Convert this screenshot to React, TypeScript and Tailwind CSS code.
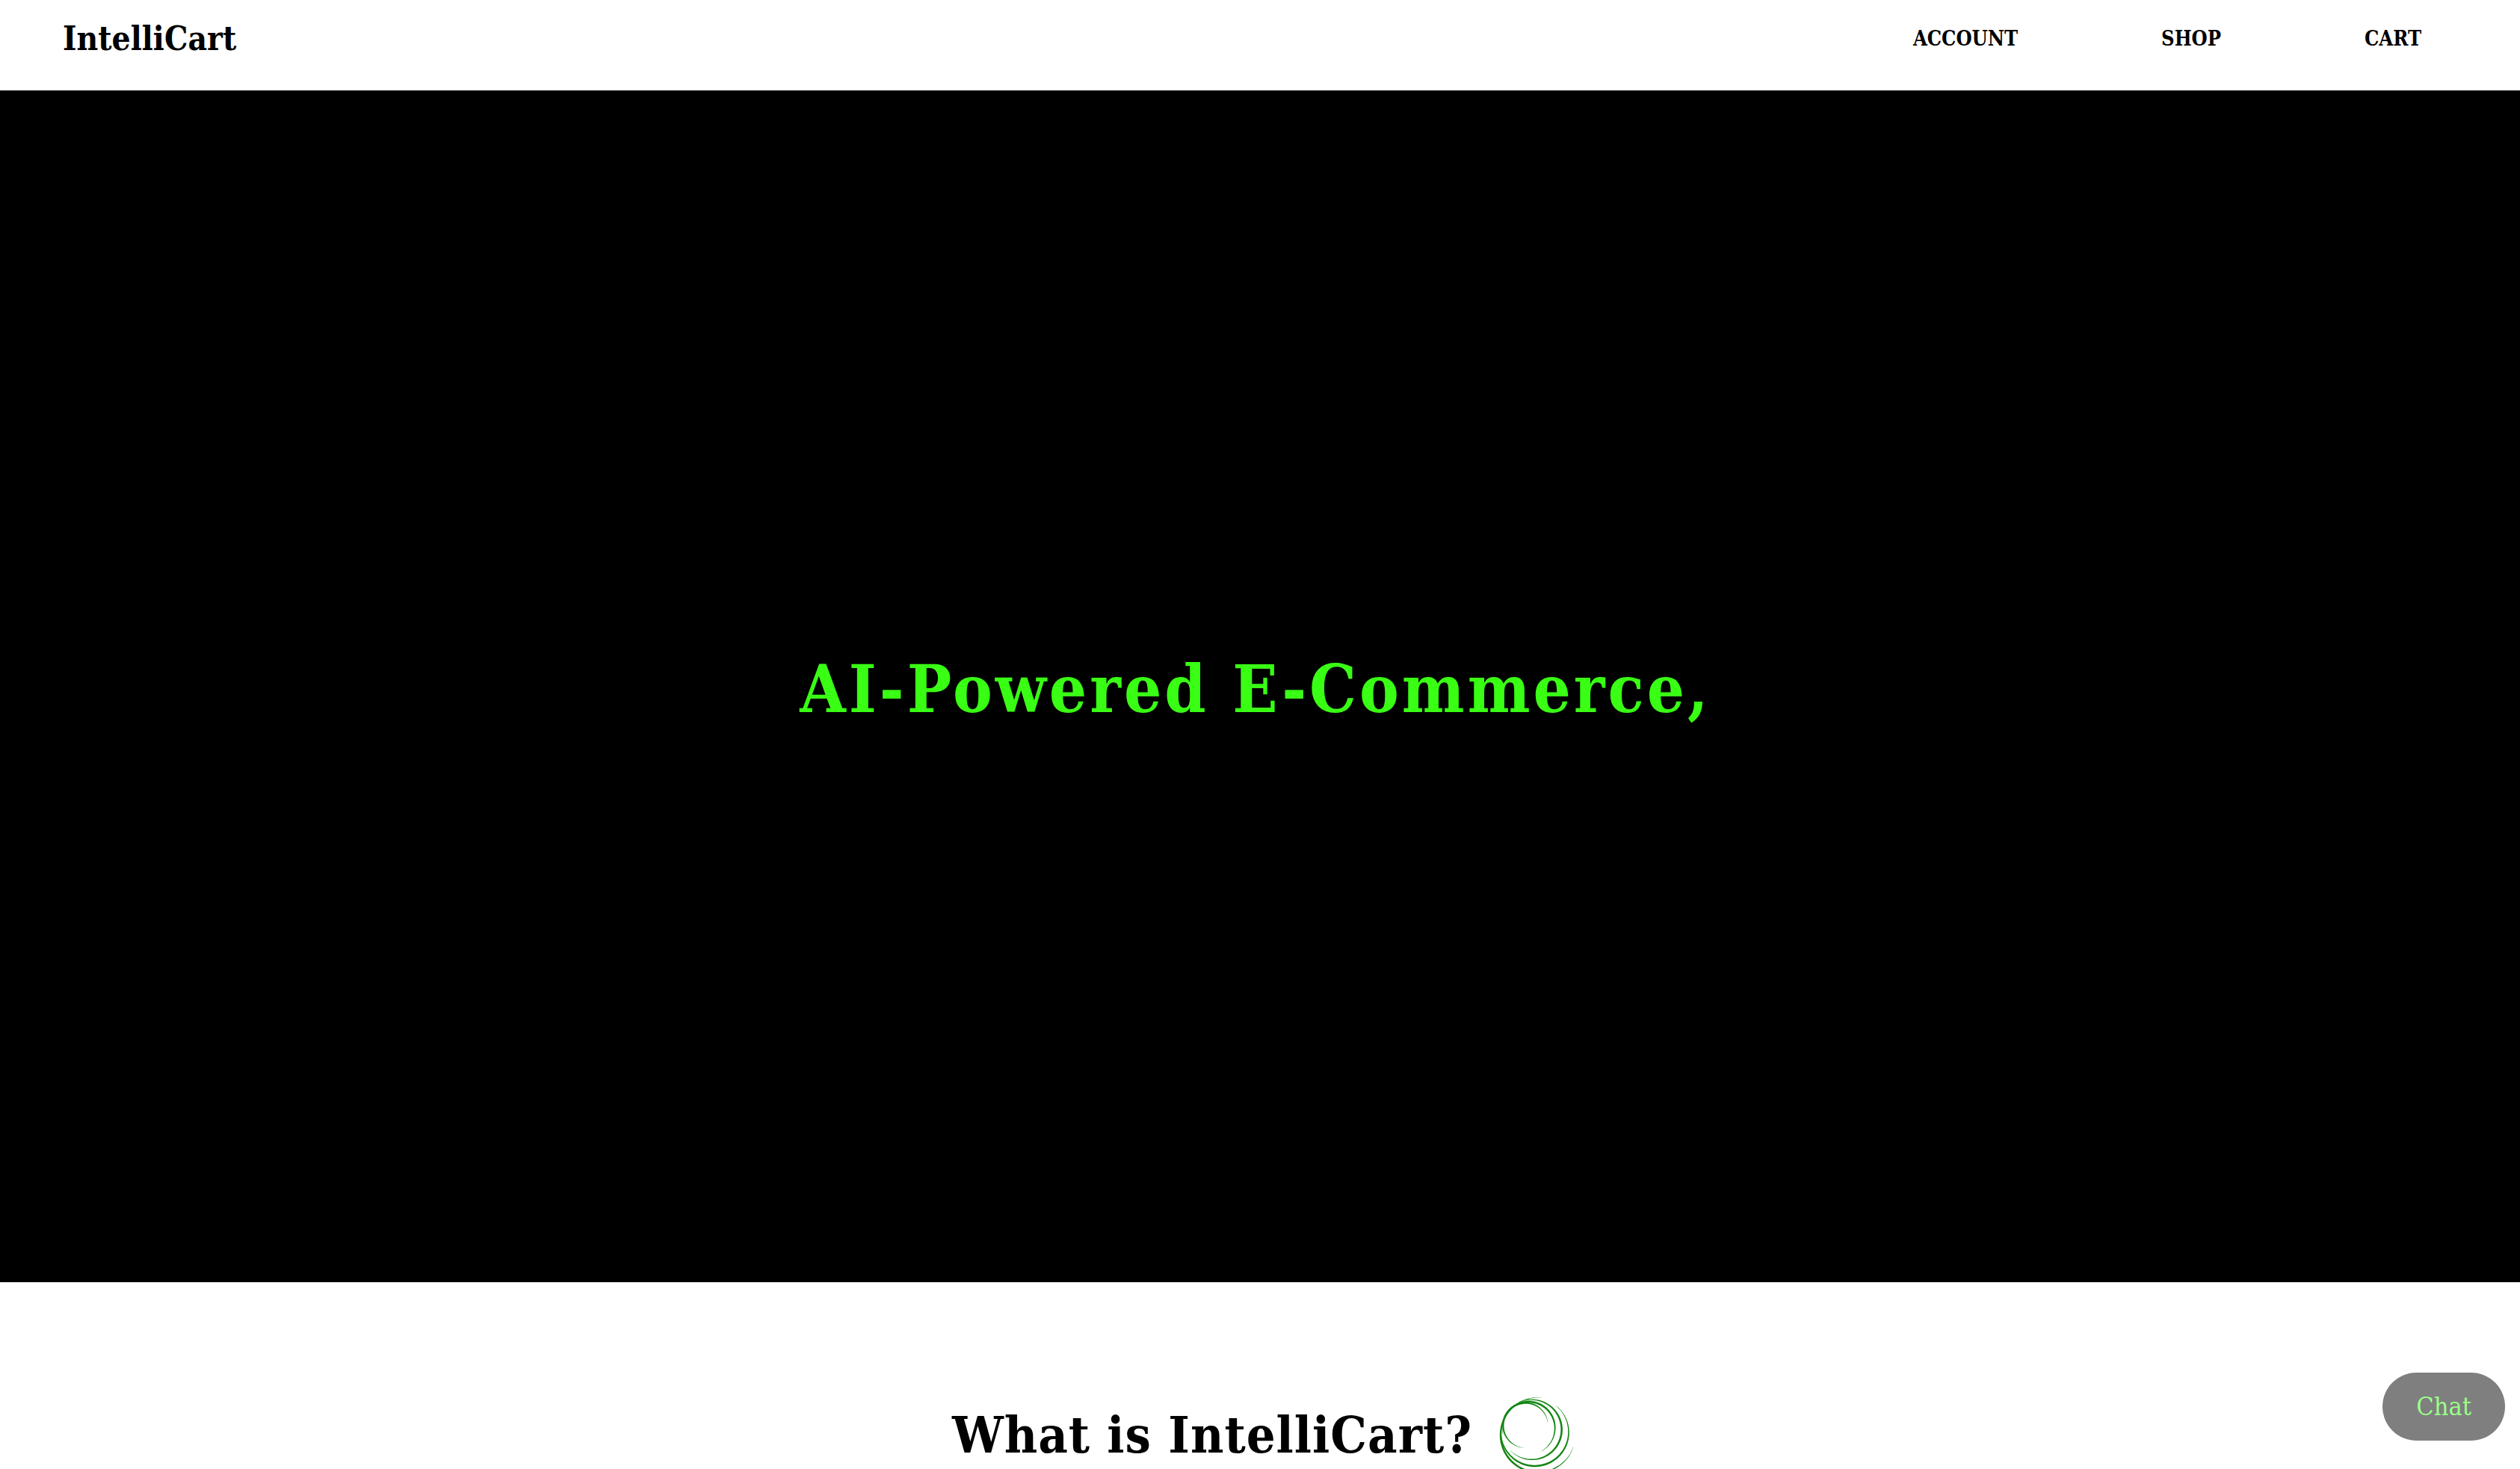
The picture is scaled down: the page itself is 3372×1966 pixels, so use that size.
type Ring = { cx: number; cy: number; r: number; start: number };

const RINGS: Ring[] = [
  { cx: 222, cy: 203, r: 90, start: 96 },
  { cx: 234, cy: 214, r: 106, start: 165 },
  { cx: 247, cy: 220, r: 120, start: 240 },
  { cx: 259, cy: 230, r: 136, start: 309 },
  { cx: 272, cy: 241, r: 150, start: 19 },
];

const SPAN = 256;
const STEPS = 96;

// Outline of an arc that is thickest in the middle and fades to a point at both ends.
function taperedArc({ cx, cy, r, start }: Ring) {
  const outer: string[] = [];
  const inner: string[] = [];
  for (let i = 0; i <= STEPS; i++) {
    const t = i / STEPS;
    const a = ((start + SPAN * t) * Math.PI) / 180;
    const half = 0.4 + 3.4 * Math.sin(Math.PI * t);
    outer.push(`${cx + (r + half) * Math.cos(a)} ${cy + (r + half) * Math.sin(a)}`);
    inner.unshift(`${cx + (r - half) * Math.cos(a)} ${cy + (r - half) * Math.sin(a)}`);
  }
  return `M${[...outer, ...inner].join("L")}Z`;
}

function Rings() {
  return (
    <svg viewBox="116 84 312 312" className="size-[104px] shrink-0" aria-hidden="true">
      {RINGS.map((ring) => (
        <path key={ring.r} d={taperedArc(ring)} fill="#128512" />
      ))}
    </svg>
  );
}

const LINKS = ["ACCOUNT", "SHOP", "CART"];

export default function App() {
  return (
    <div className="flex h-screen flex-col overflow-hidden bg-white font-['Roboto_Slab','DejaVu_Serif_Condensed','DejaVu_Serif',serif] text-black">
      <header className="flex shrink-0 items-center justify-between pt-5 pr-[132px] pb-[37px] pl-[84px]">
        <a href="#" className="text-[44px] leading-[64px] font-bold">
          IntelliCart
        </a>
        <nav className="flex items-center gap-48">
          {LINKS.map((label) => (
            <a key={label} href="#" className="text-[27px] leading-[64px] font-bold">
              {label}
            </a>
          ))}
        </nav>
      </header>

      <main className="flex min-h-0 flex-1 flex-col">
        <section className="flex flex-1 items-center justify-center bg-black pt-1.5 pr-3">
          <h1 className="text-[88px] leading-[104px] font-bold tracking-[4px] text-[#39ff14]">
            AI-Powered E-Commerce,
          </h1>
        </section>
        <section className="flex h-[250px] shrink-0 items-start justify-center gap-9 pt-[152px] pl-3">
          <h2 className="text-[68px] leading-[104px] font-bold tracking-[1px]">What is IntelliCart?</h2>
          <Rings />
        </section>
      </main>

      <button
        type="button"
        className="fixed right-5 bottom-[38px] flex h-[91px] items-center rounded-full bg-black px-[45px] text-[34px] font-medium text-[#39ff14] opacity-50"
      >
        Chat
      </button>
    </div>
  );
}
